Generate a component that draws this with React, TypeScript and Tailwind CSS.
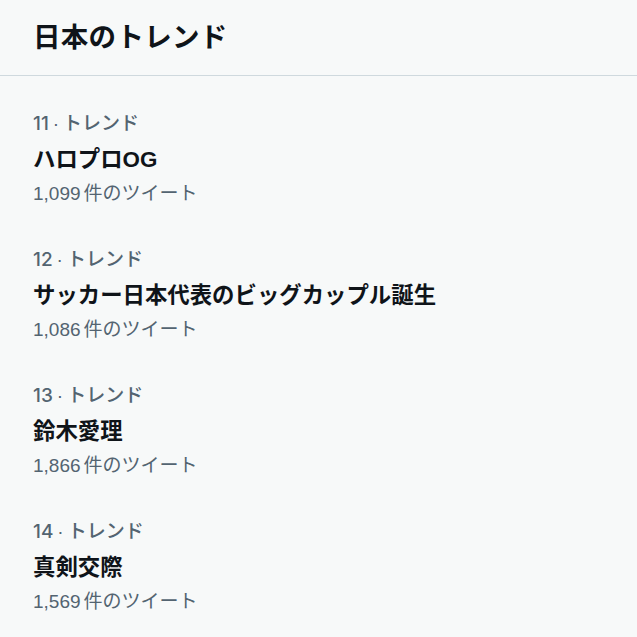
const trends = [
  { rank: 11, name: "ハロプロOG", count: "1,099" },
  { rank: 12, name: "サッカー日本代表のビッグカップル誕生", count: "1,086" },
  { rank: 13, name: "鈴木愛理", count: "1,866" },
  { rank: 14, name: "真剣交際", count: "1,569" },
];

export default function App() {
  return (
    <div
      className="min-h-[637px] w-full bg-[#f7f9f9] text-[#0f1419]"
      style={{ fontFamily: '"Liberation Sans", "Noto Sans CJK JP", sans-serif' }}
    >
      <div className="flex h-[76px] items-center border-b border-[#cfd9de] px-[33px] pt-[1px]">
        <h1 className="text-[27.5px] font-bold leading-none tracking-[0.3px]">日本のトレンド</h1>
      </div>
      <div className="pt-[16px]">
        {trends.map((t) => (
          <div key={t.rank} className="flex flex-col px-[33px] pt-[15px] pb-[16px]">
            <div className="flex h-[35px] items-center text-[19px] font-medium text-[#536471]">
              <span className="font-['Inter',sans-serif] font-medium">{t.rank}</span>
              <span className="mx-[4px]">·</span>
              <span>トレンド</span>
            </div>
            <div className="flex h-[35px] items-center text-[22.4px] font-bold">{t.name}</div>
            <div className="flex h-[35px] items-center text-[19px] text-[#536471]">
              <span className="mr-[3px]">{t.count}</span>
              <span>件のツイート</span>
            </div>
          </div>
        ))}
      </div>
    </div>
  );
}
